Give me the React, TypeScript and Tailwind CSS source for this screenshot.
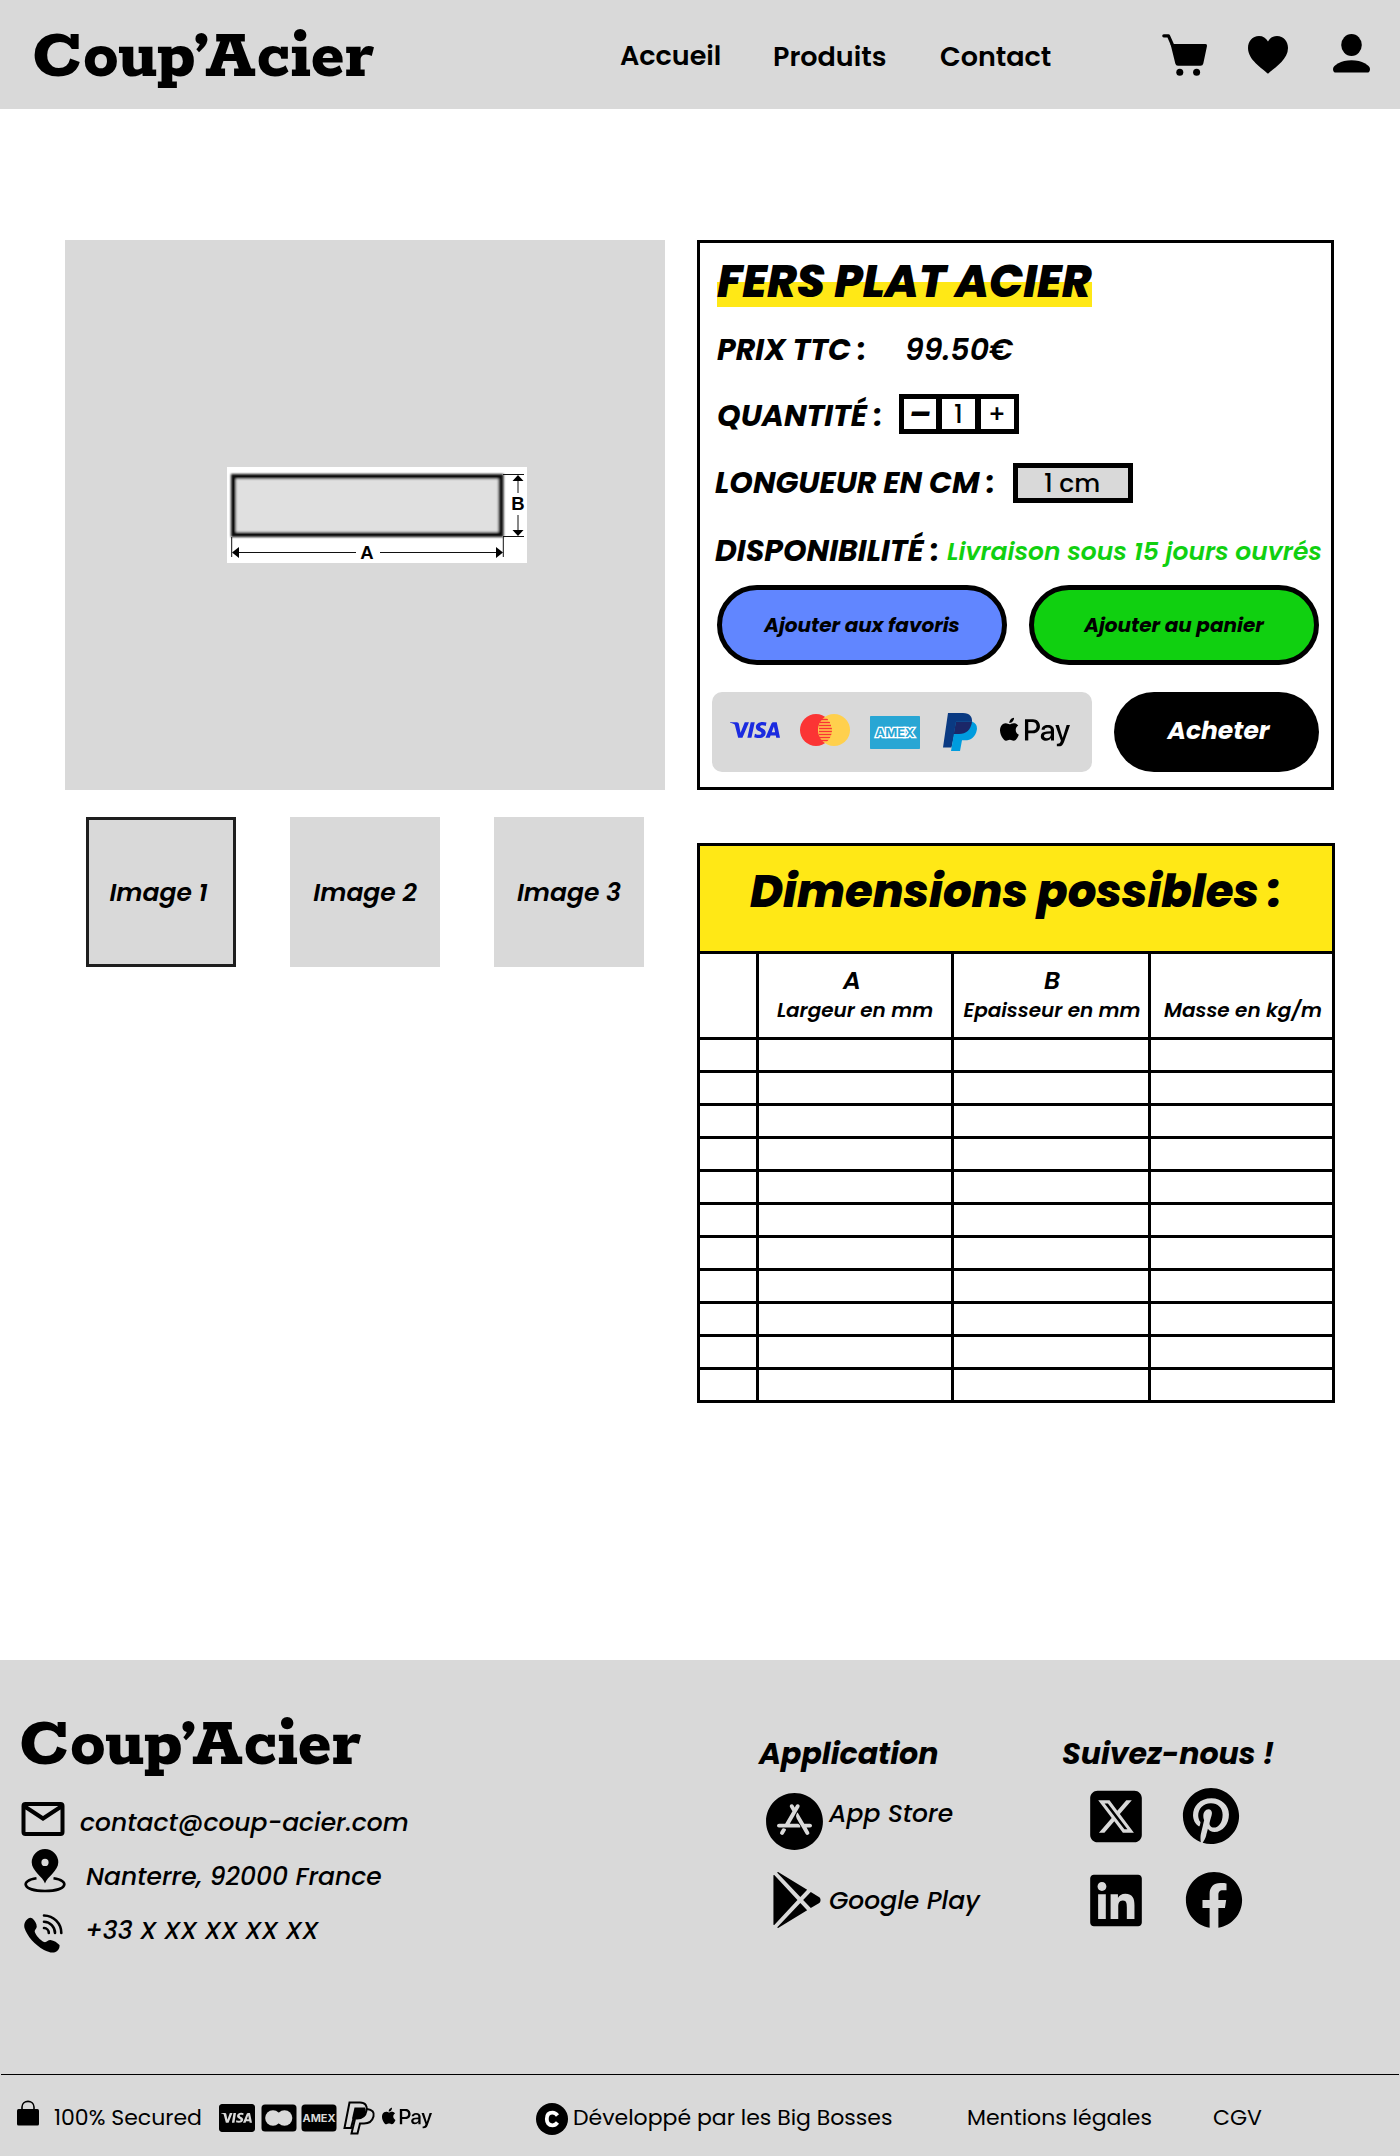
import { FaApplePay, FaCcVisa, FaFacebook, FaLinkedin, FaPinterest } from "react-icons/fa";
import { FaSquareXTwitter } from "react-icons/fa6";
import { IoLogoAppleAppstore, IoLogoGooglePlaystore } from "react-icons/io5";
import { SiVisa } from "react-icons/si";

function Logo() {
  return (
    <span className="block h-[63px] font-['Rokkitt','DejaVu_Serif',serif] text-[72px] leading-[59px] font-[750] whitespace-nowrap [font-kerning:none]">
      Coup
      <span className="-ml-[2px] inline-block w-[11px] font-['Podkova','Rokkitt',serif] text-[70px] leading-[59px] font-extrabold">’</span>
      <span className="tracking-[0.5px]">Acier</span>
    </span>
  );
}

function CartIcon() {
  return (
    <svg width="46" height="42" viewBox="0 0 46 42">
      <path d="M1.800 1.800H6.500L10.500 11" fill="none" stroke="#000" strokeWidth="3.200" strokeLinecap="round" strokeLinejoin="round" />
      <path d="M8.500 10H43.500Q45.300 10 45 12L41.300 29.500Q40.800 31.800 38.500 31.800H16Q13.800 31.800 13.300 29.500Z" />
      <circle cx="17.800" cy="38.300" r="3.500" />
      <circle cx="34.600" cy="38.300" r="3.500" />
    </svg>
  );
}

function HeartIcon() {
  return (
    <svg width="40" height="38" viewBox="0 0 40 38">
      <path d="M20 37.800C14 32 0 24 0 12C0 5 4.500 0 11 0C15 0 18 2 20 5.500C22 2 25 0 29 0C35.500 0 40 5 40 12C40 24 26 32 20 37.800Z" />
    </svg>
  );
}

function UserIcon() {
  return (
    <svg width="38" height="39" viewBox="0 0 38 39">
      <ellipse cx="18.500" cy="11" rx="10.300" ry="11" />
      <path d="M0 35C0 31.500 8 26.300 18.500 26.300S37 31.500 37 35C37 37.500 36 38.600 34 38.600H3C1 38.600 0 37.500 0 35Z" />
    </svg>
  );
}

function FlatBarDiagram() {
  return (
    <svg width="300" height="96" viewBox="0 0 300 96" className="bg-white not-italic">
      <defs>
        <filter id="soft" x="-5%" y="-10%" width="110%" height="120%">
          <feGaussianBlur stdDeviation="0.8" />
        </filter>
      </defs>
      <rect x="6.500" y="9.500" width="267.500" height="58" fill="#e0e0e0" stroke="#0a0a0a" strokeWidth="5" filter="url(#soft)" />
      <g stroke="#111" strokeWidth="1">
        <path d="M276 7.500H297M276 69.500H297M291 12V26M291 48V65" />
        <path d="M4.700 70V90M276.300 70V90M10 85.500H129M153 85.500H271" />
      </g>
      <path d="M291 8L296.500 14H285.500ZM291 69L296.500 63H285.500ZM5 85.500L12 80V91ZM276 85.500L269 80V91Z" />
      <g fontFamily="Liberation Sans" fontWeight="700" fontSize="18.500" textAnchor="middle">
        <text x="140" y="91.500">A</text>
        <text x="291" y="43">B</text>
      </g>
    </svg>
  );
}

function MastercardIcon() {
  return (
    <svg width="50" height="32" viewBox="0 0 50 32">
      <defs>
        <clipPath id="mc">
          <circle cx="16" cy="16" r="16" />
        </clipPath>
      </defs>
      <circle cx="16" cy="16" r="16" fill="#fb3434" />
      <circle cx="34" cy="16" r="16" fill="#ffd04d" />
      <g clipPath="url(#mc)">
        <path d="M20 5.500H28M20 8.500H30M19 11.500H31M19 14.500H32M19 17.500H32M19 20.500H32M19 23.500H31M20 26.500H29" stroke="#fb3434" strokeWidth="1.300" />
      </g>
    </svg>
  );
}

function AmexIcon() {
  return (
    <svg width="50" height="33" viewBox="0 0 50 33" className="not-italic">
      <rect width="50" height="33" rx="0.700" fill="#28a6d4" />
      <text x="25" y="21" textAnchor="middle" textLength="39" lengthAdjust="spacingAndGlyphs" fontFamily="Inter" fontWeight="700" fontSize="11.500" fill="#28a6d4" stroke="#fff" strokeWidth="2.600" paintOrder="stroke">
        AMEX
      </text>
    </svg>
  );
}

function PaypalIcon() {
  return (
    <svg width="34" height="38" viewBox="0 0 34 38">
      <path d="M5 0H20C27 0 29.500 4 29 9C28 17 23 21 16 21H11.500L8.500 34.500H0Z" fill="#0a3a82" />
      <path d="M13 8.500H29C33 10 34.500 13 33.800 17C32.500 24 28 27.300 22 27.300H19L17 38H8Z" fill="#009cde" />
      <path d="M13 8.500H29C28 17 23 21 16 21H10.800Z" fill="#1b2768" />
    </svg>
  );
}

function EnvelopeIcon() {
  return (
    <svg width="44" height="34" viewBox="0 0 44 34">
      <path d="M2.500 4Q2.500 2 4.500 2H39.500Q41.500 2 41.500 4V30Q41.500 32 39.500 32H4.500Q2.500 32 2.500 30ZM3 4L22 16.500L41 4" fill="none" stroke="#000" strokeWidth="4" />
    </svg>
  );
}

function PinIcon() {
  return (
    <svg width="44" height="44" viewBox="0 0 44 44">
      <path fillRule="evenodd" d="M22 34.500C20 28 8.700 22 8.700 13.300A13.300 13.300 0 0 1 35.300 13.300C35.300 22 24 28 22 34.500ZM22 9.800A3.600 3.600 0 1 0 22 17A3.600 3.600 0 1 0 22 9.800Z" />
      <path d="M13.500 29.300C-3 31.500-1 42 22 42S47 31.500 30.500 29.300" fill="none" stroke="#000" strokeWidth="2.600" />
    </svg>
  );
}

function PhoneIcon() {
  return (
    <svg width="39" height="39" viewBox="0 0 39 39">
      <path d="M2 6.500C4 4 6.500 2.700 8.500 4.500C11 7 13 10 12.700 13C12.300 15 10.300 15.800 10.800 18C12 21.500 16 26 20 28C22.500 28.800 24 25.800 26.500 26C30 26.300 33.500 29 35.500 31C36 34 34 37 31 38.200C28 39.300 24 38 20 36C11 31 3 22 .5 14C-.2 11 .5 8.500 2 6.500Z" />
      <g fill="none" stroke="#000" strokeWidth="2.600" strokeLinecap="round">
        <path d="M20 1.500A17.500 17.500 0 0 1 37.300 19" />
        <path d="M20 7.800A11.300 11.300 0 0 1 31 19" />
        <path d="M20 14A5 5 0 0 1 24.800 19" />
      </g>
    </svg>
  );
}

function LockIcon() {
  return (
    <svg width="22" height="26" viewBox="0 0 22 26">
      <rect y="9" width="22" height="16.500" rx="1.500" />
      <path d="M5 11V7C5 -.5 17 -.5 17 7V11" fill="none" stroke="#000" strokeWidth="1.600" />
    </svg>
  );
}

function MastercardBadge() {
  return (
    <svg width="36" height="28" viewBox="0 0 36 28">
      <rect x=".5" y=".5" width="35" height="27" rx="3.500" />
      <circle cx="12" cy="14" r="7.800" fill="#d9d9d9" />
      <circle cx="23.500" cy="14" r="7.800" fill="#d9d9d9" />
      <path d="M17.800 7.500V5.500M17.800 20.500V22.500" stroke="#000" strokeWidth="1" />
    </svg>
  );
}

function AmexBadge() {
  return (
    <svg width="36" height="28" viewBox="0 0 36 28">
      <rect x=".5" y=".5" width="35" height="27" rx="3.500" />
      <text x="18" y="18" textAnchor="middle" textLength="33" lengthAdjust="spacingAndGlyphs" fontFamily="Inter" fontWeight="700" fontSize="10.500" fill="#d9d9d9">
        AMEX
      </text>
    </svg>
  );
}

function PaypalOutlineIcon() {
  return (
    <svg width="34" height="34" viewBox="0 0 34 34">
      <path d="M6.500 1.500H17C22.500 1.500 24.500 5 23.500 9.500C22.500 15 19 17.500 14 17.500H10.500L8 27H1.500Z" fill="none" stroke="#000" strokeWidth="2" />
      <path d="M11.500 6.500H22C24.500 12 19.500 17.800 14 17.800H9Z" />
      <path d="M24 8C29.500 8.500 31.500 11.500 30.500 15.500C29 21 25.500 22.500 21 22.500H17L14.500 32.500H8.500L12 18" fill="none" stroke="#000" strokeWidth="2" />
    </svg>
  );
}

function CopyrightIcon() {
  return (
    <svg width="32" height="32" viewBox="0 0 32 32">
      <circle cx="16" cy="16" r="16" />
      <path d="M21.500 12.500C20 10.500 18.500 9.700 16.500 9.700C12.500 9.700 10.800 12.500 10.800 16S12.500 22.300 16.500 22.300C18.500 22.300 20 21.500 21.500 19.500" fill="none" stroke="#fff" strokeWidth="3.800" />
    </svg>
  );
}

const rows = Array.from({ length: 11 }, (_, i) => i);
const thumbs = ["Image 1", "Image 2", "Image 3"];

export default function App() {
  return (
    <div className="flex h-[2156px] w-[1400px] flex-col bg-white font-['Poppins','Inter',sans-serif] leading-none whitespace-nowrap text-black">
      <header className="flex h-[109px] items-center bg-[#d9d9d9]">
        <div className="w-[588px] pt-[3px] pl-8">
          <Logo />
        </div>
        <nav className="flex w-[541px] items-center pt-1 pl-8 text-[27px] font-semibold">
          <a className="w-[153px] pb-[3px]">Accueil</a>
          <a className="w-[167px]">Produits</a>
          <a>Contact</a>
        </nav>
        <div className="flex items-center pl-[33px]">
          <div className="w-[86px]"><CartIcon /></div>
          <div className="w-[85px]"><HeartIcon /></div>
          <div className="pb-[2px]"><UserIcon /></div>
        </div>
      </header>

      <main className="flex h-[1551px] pt-[131px] pl-[65px] italic">
        <section className="w-[632px]">
          <div className="flex h-[550px] w-[600px] items-center justify-center bg-[#d9d9d9] pl-[24px]">
            <FlatBarDiagram />
          </div>
          <div className="mt-[27px] flex gap-[54px] pl-[21px] text-[25px] font-semibold">
            {thumbs.map((t, i) => (
              <div
                key={t}
                className={
                  i === 0
                    ? "flex h-[150px] w-[150px] items-center justify-center border-[3px] border-[#1e1e1e] bg-[#d9d9d9] pr-[5px]"
                    : "flex h-[150px] w-[150px] items-center justify-center bg-[#d9d9d9]"
                }
              >
                {t}
              </div>
            ))}
          </div>
        </section>

        <div>
          <section className="flex h-[550px] w-[637px] flex-col border-[3px] border-black pt-3 text-[30px]">
            <h1 className="ml-[17px] flex h-[52px] w-[375px] items-center bg-[linear-gradient(to_bottom,transparent_27px,#ffe816_27px)] text-[45px] font-extrabold">
              FERS PLAT ACIER
            </h1>
            <div className="mt-[23px] flex h-10 items-center pl-[17px]">
              <span className="w-[188px] font-bold">PRIX TTC :</span>
              <span className="font-semibold">99.50€</span>
            </div>
            <div className="mt-6 flex h-10 items-center pl-[17px]">
              <span className="w-[182px] pt-1 font-bold">QUANTITÉ :</span>
              <div className="flex h-10 w-[120px] divide-x-[6px] divide-black border-[5px] border-black text-[25px] not-italic">
                <button className="flex flex-1 items-center justify-center pb-px text-[32px] font-bold italic">–</button>
                <span className="flex flex-1 items-center justify-center font-medium">1</span>
                <button className="flex flex-1 items-center justify-center pr-px font-medium">+</button>
              </div>
            </div>
            <div className="mt-[29px] flex h-10 items-center pl-[15px]">
              <span className="w-[298px] font-bold">LONGUEUR EN CM :</span>
              <div className="flex h-10 w-[120px] items-center justify-center border-[5px] border-black bg-[#d9d9d9] pr-[2px] text-[25px] font-medium not-italic">
                1 cm
              </div>
            </div>
            <div className="mt-7 flex h-10 items-center pl-[15px]">
              <span className="w-[232px] font-bold">DISPONIBILITÉ :</span>
              <span className="text-[25px] font-semibold text-[#10d010]">Livraison sous 15 jours ouvrés</span>
            </div>
            <div className="mt-3.5 flex gap-[22px] pl-[17px] text-[20px] font-bold">
              <button className="h-20 w-[290px] rounded-full border-[5px] border-black bg-[#6186ff]">Ajouter aux favoris</button>
              <button className="h-20 w-[290px] rounded-full border-[5px] border-black bg-[#10d010]">Ajouter au panier</button>
            </div>
            <div className="mt-[27px] flex gap-[22px] pl-3">
              <div className="flex h-20 w-[380px] items-center rounded-[10px] bg-[#d9d9d9] pl-[18px]">
                <SiVisa className="mb-[5px] h-[50px] w-[50px] text-[#1b2be0]" />
                <div className="mb-1 ml-5"><MastercardIcon /></div>
                <div className="ml-5"><AmexIcon /></div>
                <div className="ml-[23px]"><PaypalIcon /></div>
                <FaApplePay className="ml-[23px] h-14 w-[70px]" />
              </div>
              <button className="h-20 w-[205px] rounded-full bg-black pb-1 pl-1 text-[25px] font-bold text-white">Acheter</button>
            </div>
          </section>

          <section className="mt-[53px] w-[638px] border-[3px] border-black">
            <h2 className="flex h-[108px] items-center border-b-[3px] border-black bg-[#ffe816] pb-[14px] pl-[50px] text-[45px] font-extrabold">
              Dimensions possibles :
            </h2>
            <div className="grid h-[86px] grid-cols-[59px_195px_197px_1fr] border-b-[3px] border-black font-semibold">
              <div className="border-r-[3px] border-black" />
              <div className="flex flex-col items-center border-r-[3px] border-black pt-[14px]">
                <span className="mr-[6px] text-[25px] leading-[25px]">A</span>
                <span className="mt-[7px] text-[20px]">Largeur en mm</span>
              </div>
              <div className="flex flex-col items-center border-r-[3px] border-black pt-[14px] pl-[2px]">
                <span className="text-[25px] leading-[25px]">B</span>
                <span className="mt-[7px] text-[20px]">Epaisseur en mm</span>
              </div>
              <div className="pt-[46px] pl-[13px] text-[20px]">Masse en kg/m</div>
            </div>
            {rows.map((r) => (
              <div key={r} className="grid h-[33px] grid-cols-[59px_195px_197px_1fr] border-b-[3px] border-black last:h-[30px] last:border-b-0">
                <div className="border-r-[3px] border-black" />
                <div className="border-r-[3px] border-black" />
                <div className="border-r-[3px] border-black" />
                <div />
              </div>
            ))}
          </section>
        </div>
      </main>

      <footer className="flex h-[496px] flex-col bg-[#d9d9d9] italic">
        <div className="flex h-[414px]">
          <div className="w-[758px] pt-[53px] text-[25px] font-medium">
            <div className="pl-[19px] not-italic"><Logo /></div>
            <div className="mt-[26px] flex h-[34px] items-center pl-[21px]">
              <EnvelopeIcon />
              <span className="ml-[15px] pt-[7px]">contact@coup-acier.com</span>
            </div>
            <div className="mt-[13px] flex h-11 items-center pl-[23px]">
              <PinIcon />
              <span className="ml-[19px] pt-[11px]">Nanterre, 92000 France</span>
            </div>
            <div className="mt-[21px] flex h-[39px] items-center pl-6">
              <PhoneIcon />
              <span className="ml-[22px] pb-[7px]">+33 X XX XX XX XX</span>
            </div>
          </div>
          <div className="w-[304px] pt-[79px] pl-px text-[25px] font-medium">
            <h3 className="text-[30px] font-bold">Application</h3>
            <div className="mt-[23px] flex h-[58px] items-center pl-[3px]">
              <IoLogoAppleAppstore className="h-[65px] w-[65px] shrink-0" />
              <span className="ml-[2px] pb-[15px]">App Store</span>
            </div>
            <div className="mt-[21px] flex h-[58px] items-center pl-[9px]">
              <IoLogoGooglePlaystore preserveAspectRatio="none" className="h-[64px] w-[58px] shrink-0" />
              <span className="ml-[3px]">Google Play</span>
            </div>
          </div>
          <div className="pt-[79px]">
            <h3 className="text-[30px] font-bold">Suivez-nous !</h3>
            <div className="mt-[18px] grid grid-cols-[92px_60px] gap-y-[25px] pl-6">
              <FaSquareXTwitter className="h-[59px] w-[60px]" />
              <FaPinterest className="ml-[4px] h-[58px] w-[58px]" />
              <FaLinkedin className="h-[59px] w-[60px]" />
              <FaFacebook className="ml-[7px] h-[58px] w-[58px]" />
            </div>
          </div>
        </div>
        <div className="mx-px flex h-[82px] items-center border-t border-black pl-4 text-[22px] not-italic">
          <div className="mb-[5px]"><LockIcon /></div>
          <span className="mt-1 ml-[15px] w-[165px]">100% Secured</span>
          <div className="flex items-center pt-1">
            <FaCcVisa className="h-8 w-9" />
            <div className="ml-[6px] pt-px"><MastercardBadge /></div>
            <div className="ml-1"><AmexBadge /></div>
            <div className="ml-[6px]"><PaypalOutlineIcon /></div>
            <FaApplePay className="ml-[5px] h-10 w-[50px]" />
          </div>
          <div className="ml-[104px] pt-[7px]"><CopyrightIcon /></div>
          <span className="mt-1 ml-[5px] w-[394px]">Développé par les Big Bosses</span>
          <span className="mt-1 w-[246px]">Mentions légales</span>
          <span className="mt-1">CGV</span>
        </div>
      </footer>
    </div>
  );
}
